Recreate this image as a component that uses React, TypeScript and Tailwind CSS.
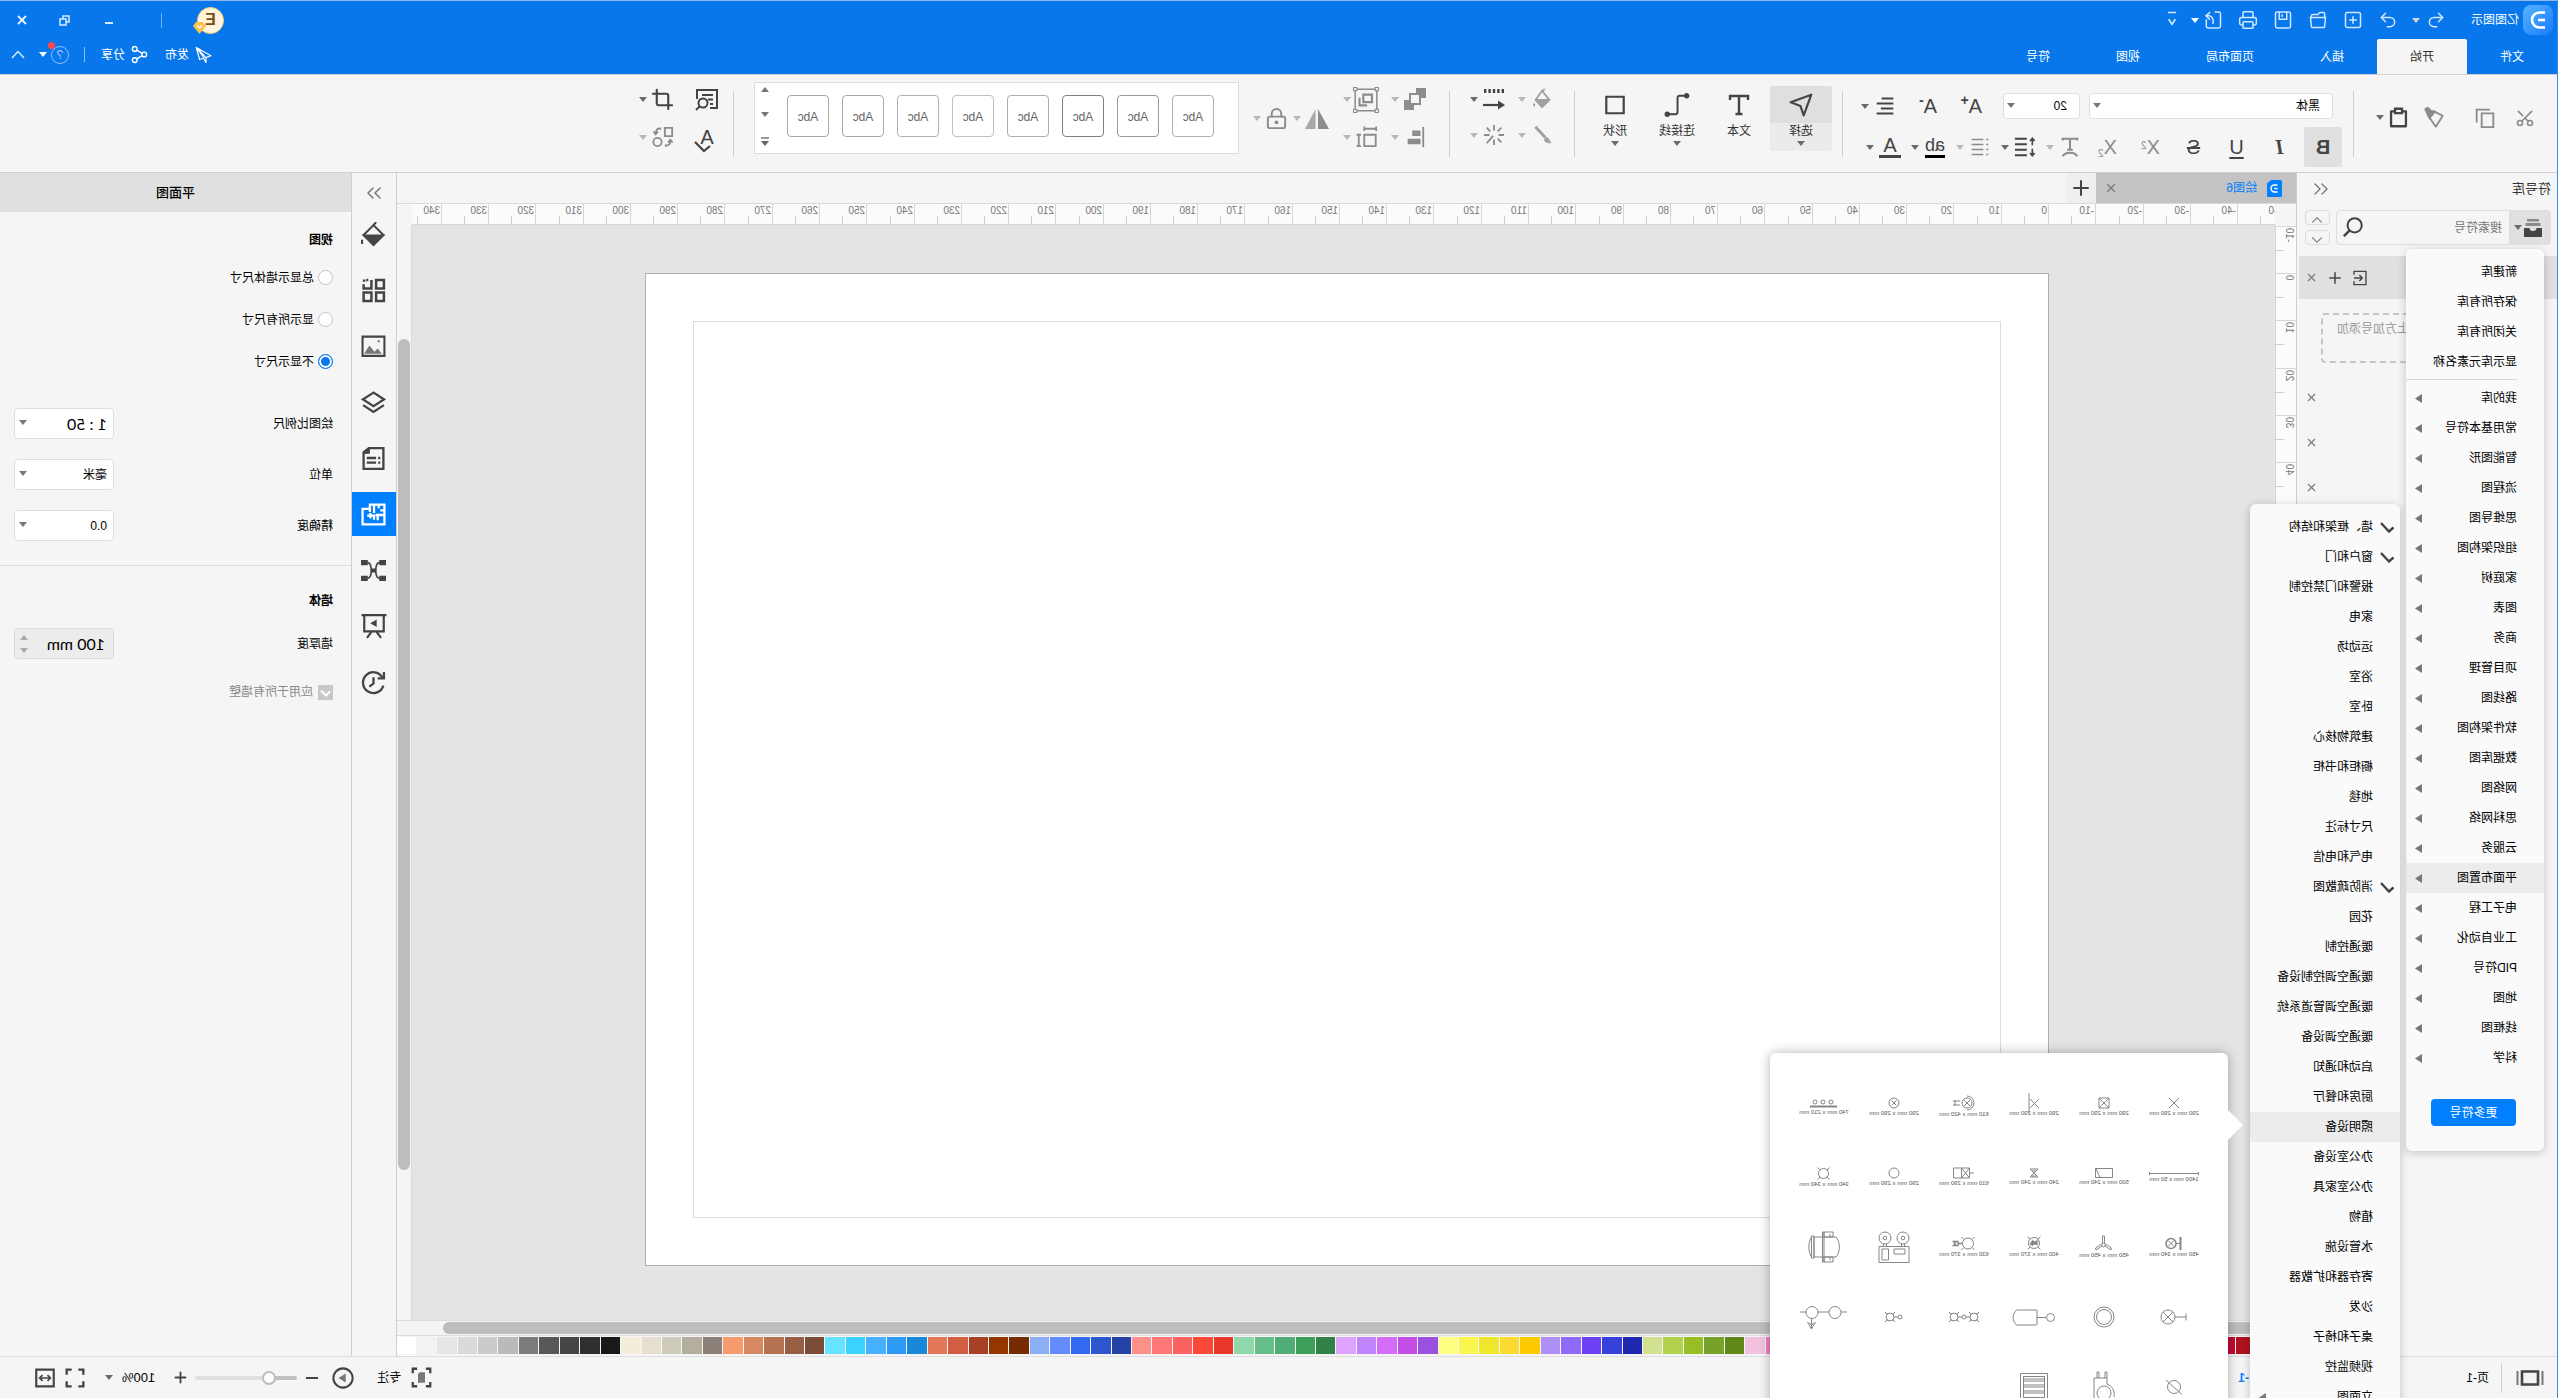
import React from "react";
import clsx from "clsx";
import {
  ChevronDown,
  ChevronUp,
  ChevronsLeft,
  ChevronsRight,
  Copy,
  Crop,
  LockKeyhole,
  Plus,
  Printer,
  Redo2,
  Save,
  Scissors,
  Search,
  Share2,
  SquarePlus,
  Undo2,
  X,
} from "lucide-react";

const mainMenuTop = ["新建库", "保存所有库", "关闭所有库", "显示库元素名称"];

const mainMenu = [
  "我的库",
  "常用基本符号",
  "智能图形",
  "流程图",
  "思维导图",
  "组织架构图",
  "家庭树",
  "图表",
  "商务",
  "项目管理",
  "路线图",
  "软件架构图",
  "数据库图",
  "网络图",
  "思科网络",
  "云服务",
  "平面布置图",
  "电子工程",
  "工业自动化",
  "PID符号",
  "地图",
  "线框图",
  "科学",
];

const subMenu: { label: string; checked?: boolean; more?: boolean }[] = [
  { label: "墙、框架和结构", checked: true },
  { label: "窗户和门", checked: true },
  { label: "报警和门禁控制" },
  { label: "家电" },
  { label: "运动场" },
  { label: "浴室" },
  { label: "卧室" },
  { label: "建筑物核心" },
  { label: "橱柜和书柜" },
  { label: "地毯" },
  { label: "尺寸标注" },
  { label: "电气和电信" },
  { label: "消防疏散图", checked: true },
  { label: "花园" },
  { label: "暖通控制" },
  { label: "暖通空调控制设备" },
  { label: "暖通空调管道系统" },
  { label: "暖通空调设备" },
  { label: "启动和通知" },
  { label: "厨房和餐厅" },
  { label: "照明设备" },
  { label: "办公室设备" },
  { label: "办公室家具" },
  { label: "植物" },
  { label: "水管设施" },
  { label: "寄存器和扩散器" },
  { label: "沙发" },
  { label: "桌子和椅子" },
  { label: "视频监控" },
  { label: "立面图", more: true },
];

const palette = [
  "#8a0f12", "#9c1016", "#b0121f", "#c40a33", "#d81b4a", "#e83a66", "#f06a8a", "#f59ab0",
  "#00695c", "#00897b", "#26a69a", "#4db6ac", "#80cbc4", "#37474f", "#455a64", "#607d8b",
  "#78909c", "#90a4ae", "#5d4037", "#795548", "#8d6e63", "#a1887f", "#8e1563", "#b01f7d",
  "#d4439f", "#f07fc6", "#f2c2de", "#5f8816", "#76a12a", "#97be25", "#b2d14c", "#d2e190",
  "#1f27ae", "#3641d9", "#6b41f3", "#8f6bf9", "#ad91f9", "#fdca00", "#fbdb30", "#efe72b",
  "#fbf54f", "#ffff84", "#9a51df", "#c44fe6", "#d56dfa", "#c084ff", "#dda3ff", "#318148",
  "#3d9f57", "#51ad76", "#66be89", "#91d7ac", "#e83829", "#fc4839", "#fb6161", "#ff7676",
  "#ff9089", "#2641a6", "#2d57d1", "#3369f1", "#648cff", "#8aaff7", "#762b00", "#943600",
  "#a83f27", "#d15e41", "#e47759", "#1988d9", "#2d9bf5", "#46b1ff", "#3cd2ff", "#66e4ff",
  "#7a4d38", "#985e44", "#b77351", "#d68861", "#f79b6f", "#8a8077", "#b3ae9e", "#cecbbc",
  "#e6dfd0", "#f4edda", "#191919", "#2f2f2f", "#454545", "#585858", "#7b7b7b", "#bababa",
  "#cbcbcb", "#dadada", "#e6e6e6", "#f2f2f2", "#ffffff",
];

// canvas scale: screen pixels for every 10 mm on paper
const STEP = 47.27;
const ORIGIN_X = 226;
const ORIGIN_Y = 48;

interface CaretProps {
  className?: string;
}

const Caret = ({ className = "text-[#6b6b6b]" }: CaretProps) => (
  <svg viewBox="0 0 8 5" className={clsx("h-[5px] w-2 shrink-0", className)}>
    <path d="M0 0h8L4 5z" fill="currentColor" />
  </svg>
);

interface DrawProps {
  size?: number;
  className?: string;
  width?: number;
  children: React.ReactNode;
}

const Draw = ({ size = 24, className, width = 2, children }: DrawProps) => (
  <svg
    viewBox="0 0 24 24"
    width={size}
    height={size}
    fill="none"
    stroke="currentColor"
    strokeWidth={width}
    className={clsx("shrink-0", className)}
  >
    {children}
  </svg>
);

const Divider = () => <div className="mt-4 h-[66px] w-px shrink-0 bg-[#cfcfcf]" />;

interface ToolProps {
  label: string;
  caret?: boolean;
  muted?: boolean;
  children: React.ReactNode;
}

const Tool = ({ label, caret, muted, children }: ToolProps) => (
  <button
    aria-label={label}
    className={clsx(
      "flex h-6 shrink-0 items-center gap-1",
      muted ? "text-[#8c8c8c]" : "text-[#444]"
    )}
  >
    <span className="grid h-6 w-6 place-items-center">{children}</span>
    {caret && <Caret className={muted ? "text-[#b8b8b8]" : "text-[#6b6b6b]"} />}
  </button>
);

const TitleBar = () => (
  <header className="flex h-[74px] shrink-0 justify-between border-t border-[#8fb8e6] bg-[#0877eb] text-xs text-white">
    <div className="flex flex-col">
      <div className="flex h-[38px] items-center pl-1 text-[#cfe7ff]">
        <div className="grid h-[30px] w-[30px] place-items-center rounded-lg bg-gradient-to-tr from-[#1a78ff] to-[#55b4ff]">
          <svg viewBox="0 0 20 20" className="h-5 w-5" fill="none" stroke="#fff" strokeWidth="2.6">
            <path d="M3 2.5h5.5a7.5 7.5 0 0 1 0 15H3" />
            <path d="M3 10h7" />
          </svg>
        </div>
        <span className="ml-1 w-[73px] text-white">亿图图示</span>
        <button aria-label="撤销" className="flex items-center gap-1.5">
          <Undo2 size={20} strokeWidth={1.8} />
          <Caret className="text-[#d8d8d8]" />
        </button>
        <div className="ml-3.5 flex items-center gap-[15px]">
          <button aria-label="重做"><Redo2 size={20} strokeWidth={1.8} /></button>
          <button aria-label="新建"><SquarePlus size={20} strokeWidth={1.8} /></button>
          <button aria-label="打开">
            <Draw size={20} width={1.8}>
              <path d="M4 8V5c0-1.500.5-2 2-2h4l2 2.500h6c1.500 0 2 .5 2 2V9M3 9h18l-1 10.500c-.2 1-.5 1.500-1.500 1.500h-13c-1 0-1.300-.5-1.500-1.500z" />
            </Draw>
          </button>
          <button aria-label="保存">
            <Draw size={20} width={1.8}>
              <path d="M5 2.500h14a2 2 0 0 1 2 2v15a2 2 0 0 1-2 2H5a2 2 0 0 1-2-2v-15a2 2 0 0 1 2-2zM7.500 2.500V11h9V2.500M13 5v3.500" />
            </Draw>
          </button>
          <button aria-label="打印"><Printer size={20} strokeWidth={1.8} /></button>
          <button aria-label="导出" className="flex items-center gap-1">
            <Draw size={20} width={1.8}>
              <path d="M10 2.500H5a2 2 0 0 0-2 2v15a2 2 0 0 0 2 2h13a2 2 0 0 0 2-2V11" />
              <path d="M15.500 2.500l5 4.500-5 4.500M20 7h-3c-4 0-6 4-5 10" />
            </Draw>
            <Caret className="text-white" />
          </button>
          <button aria-label="自定义" className="-ml-1.5">
            <Draw size={20} width={2}>
              <path d="M7 3h10M8 11l4 6 4-6" />
            </Draw>
          </button>
        </div>
      </div>
      <nav className="flex h-[35px]">
        {["文件", "开始", "插入", "页面布局", "视图", "符号"].map((tab) => (
          <button
            key={tab}
            className={clsx(
              "h-full rounded-t-xs px-[33px]",
              tab === "开始" ? "bg-[#f5f5f5] text-[#333]" : "text-white"
            )}
          >
            {tab}
          </button>
        ))}
      </nav>
    </div>

    <div className="flex flex-col">
      <div className="flex h-[38px] items-center justify-end pr-[17px]">
        <div className="relative mr-[35px]">
          <div className="grid h-[27px] w-[27px] place-items-center rounded-full border border-[#f3cf7a] bg-[#fff3dc] text-base font-bold text-[#7a4a12]">
            E
          </div>
          <svg viewBox="0 0 13 13" className="absolute -right-1 bottom-0 h-[13px] w-[13px]">
            <path d="M3 1h7l3 4-6.500 8L0 5z" fill="#fdc04a" />
            <path d="M4 4.500l2.500 2.500L9 4.500" fill="none" stroke="#fff" strokeWidth="1.300" />
          </svg>
        </div>
        <div className="mr-12 h-[15px] w-px bg-[#6fb2f7]" />
        <button aria-label="最小化" className="mr-[35px] mt-1.5 h-0.5 w-2 bg-[#d6eaff]" />
        <button aria-label="还原" className="mr-8">
          <svg viewBox="0 0 11 11" className="h-[11px] w-[11px]" fill="none" stroke="#d6eaff" strokeWidth="1.500">
            <path d="M3.500 7H1V1h6v2.500M4 4h6v6H4z" />
          </svg>
        </button>
        <button aria-label="关闭">
          <svg viewBox="0 0 10 10" className="h-2.5 w-2.5" stroke="#e8f4ff" strokeWidth="1.800">
            <path d="M1 1l8 8M9 1l-8 8" />
          </svg>
        </button>
      </div>
      <div className="flex h-[31px] items-center justify-end pr-[11px]">
        <button className="mr-4 flex items-center gap-[5px]">
          <Draw size={18} width={1.6}>
            <path d="M21 2L1.500 13l6.500 2.500L21 2l-4.500 16-6-2L21 2M8 15.500V22l3-5" strokeLinejoin="round" />
          </Draw>
          发布
        </button>
        <button className="mr-4 flex items-center gap-[5px]">
          <Share2 size={19} strokeWidth={1.8} />
          分享
        </button>
        <div className="mr-[15px] h-[15px] w-px bg-[#8cc3fa]" />
        <button aria-label="帮助" className="relative mr-3.5 flex items-center gap-1">
          <span className="grid h-[18px] w-[18px] place-items-center rounded-full border border-[#8cc3fa] text-[#a8d2fc]">
            ?
          </span>
          <Caret className="text-white" />
          <span className="absolute left-3.5 -top-1 h-[7px] w-[7px] rounded-full bg-[#ff4747]" />
        </button>
        <button aria-label="折叠功能区">
          <svg viewBox="0 0 14 9" className="h-[9px] w-3.5" fill="none" stroke="#d6eaff" strokeWidth="1.500">
            <path d="M1 8l6-6.500L13 8" />
          </svg>
        </button>
      </div>
    </div>
  </header>
);

const FontGroup = () => (
  <div className="ml-[11px] flex w-[499px] shrink-0 flex-col gap-2 pt-[18px] text-[#444]">
    <div className="flex h-[26px] items-center pl-[9px]">
      <div className="relative mr-[9px]">
        <select aria-label="字体" className="h-[26px] w-[244px] appearance-none rounded-sm border border-[#dedede] bg-white px-3 text-xs text-black">
          <option>黑体</option>
        </select>
        <Caret className="absolute right-1 top-2.5 text-[#777]" />
      </div>
      <div className="relative mr-[21px]">
        <select aria-label="字号" className="h-[26px] w-[77px] appearance-none rounded-sm border border-[#dedede] bg-white px-3 text-xs text-black">
          <option>20</option>
        </select>
        <Caret className="absolute right-1 top-2.5 text-[#777]" />
      </div>
      <button aria-label="增大字号" className="mr-[21px] flex w-6 items-start text-xl leading-6">
        A<span className="text-sm font-bold leading-3">+</span>
      </button>
      <button aria-label="减小字号" className="mr-4 flex w-6 items-start text-xl leading-6">
        A<span className="text-sm font-bold leading-3">-</span>
      </button>
      <Tool label="对齐" caret>
        <Draw size={20} width={2.6}>
          <path d="M2 3h14M2 9h20M2 15h15M2 21h20" />
        </Draw>
      </Tool>
    </div>
    <div className="flex h-10 items-center text-xl">
      <button className="mr-[3px] h-10 w-[38px] rounded-xs bg-[#e0e0e0] font-bold">B</button>
      <button className="w-[43px] font-['Liberation_Serif',serif] font-bold italic">I</button>
      <button className="w-[43px] underline underline-offset-3">U</button>
      <button className="w-[43px] line-through">S</button>
      <button className="w-[43px] text-[#8c8c8c]">
        X<sup className="text-[10px]">2</sup>
      </button>
      <button className="mr-1 w-[43px] text-[#8c8c8c]">
        X<sub className="text-[10px]">2</sub>
      </button>
      <div className="flex gap-[9px]">
        <Tool label="文字方向" caret muted>
          <Draw size={22} width={2.2}>
            <path d="M4 5V3h16v2M12 3v12M9 15h6M4 22c3-5 13-5 16 0" />
          </Draw>
        </Tool>
        <Tool label="行距" caret>
          <Draw size={22} width={2.4}>
            <path d="M10 3h13M10 9h13M10 15h13M10 21h13" />
            <path d="M4 3v7M1.500 5.500L4 2.500l2.500 3M4 14v7M1.500 18.500l2.500 3 2.500-3" strokeWidth="1.800" />
          </Draw>
        </Tool>
        <Tool label="项目符号" caret muted>
          <Draw size={20} width={2}>
            <path d="M8 3h14M8 9h14M8 15h14M8 21h14M2 3h2.500M2 9h2.500M2 15h2.500M2 21h2.500" />
          </Draw>
        </Tool>
        <Tool label="突出显示" caret>
          <span className="border-b-3 border-black text-lg leading-[19px]">ab</span>
        </Tool>
        <Tool label="字体颜色" caret>
          <span className="w-[22px] border-b-3 border-[#444] text-xl leading-[19px]">A</span>
        </Tool>
      </div>
    </div>
  </div>
);

interface BigToolProps {
  label: string;
  caret?: boolean;
  active?: boolean;
  children: React.ReactNode;
}

const BigTool = ({ label, caret, active, children }: BigToolProps) => (
  <button
    className={clsx(
      "flex h-[65px] w-[62px] flex-col items-center rounded-xs text-xs leading-4 text-[#333]",
      active && "bg-[#ebebeb]"
    )}
  >
    <span className={clsx("grid h-[37px] w-full place-items-center rounded-t-xs text-[#444]", active && "bg-[#dfdfdf]")}>
      {children}
    </span>
    {label}
    {caret && <Caret className="mt-0.5 text-[#6b6b6b]" />}
  </button>
);

const StyleGallery = () => {
  const borders = [
    "border-[#b0b0b0]",
    "border-[#9a9a9a]",
    "border-[#808080]",
    "border-[#adadad]",
    "border-[#c0c0c0]",
    "border-[#b0b0b0]",
    "border-[#a8a8a8]",
    "border-[#a8a8a8]",
  ];
  return (
    <div className="ml-3.5 mt-[7px] flex h-[72px] w-[485px] shrink-0 items-center justify-between border border-[#dcdcdc] bg-white pb-1 pl-6 pr-1.5">
      <div className="flex gap-[13px]">
        {borders.map((border, i) => (
          <button
            key={i}
            className={clsx("h-[42px] w-[42px] rounded-sm border-[1.5px] pt-0.5 text-xs text-[#666]", border)}
          >
            Abc
          </button>
        ))}
      </div>
      <div className="flex flex-col items-center gap-5">
        <button aria-label="上移"><Caret className="rotate-180 text-[#777]" /></button>
        <button aria-label="下移"><Caret className="text-[#777]" /></button>
        <button aria-label="更多样式" className="border-t-2 border-[#999] pt-0.5"><Caret className="text-[#666]" /></button>
      </div>
    </div>
  );
};

const Ribbon = () => (
  <div className="flex h-[99px] shrink-0 border-y border-[#d0d0d0] bg-[#f5f5f5]">
    <div className="flex w-[203px] shrink-0 items-center pb-3 pl-[22px] text-[#8c8c8c]">
      <button aria-label="剪切" className="mr-5"><Scissors size={20} className="-rotate-90" /></button>
      <button aria-label="复制" className="mr-[30px]">
        <Draw size={20} width={2.2}>
          <path d="M2 6.500h14V23H2z" />
          <path d="M6 2h16v15.500" />
        </Draw>
      </button>
      <button aria-label="格式刷" className="mr-3.5">
        <Draw size={22}>
          <path d="M2.500 9.500l9-4.500 5.500 6.500-7 10z" strokeLinejoin="round" />
          <path d="M11 5l4.500-1L19 .5l2.500 2L19.500 7l-2.500 5z" fill="currentColor" />
        </Draw>
      </button>
      <button aria-label="粘贴" className="flex items-center gap-1 text-[#444]">
        <Draw size={21} width={2.6}>
          <path d="M7 5H3.500v17h17V5H17" strokeLinejoin="round" />
          <path d="M8 2h8v5H8z" />
        </Draw>
        <Caret />
      </button>
    </div>
    <Divider />
    <FontGroup />
    <Divider />
    <div className="ml-2.5 mr-[9px] mt-[11px] flex shrink-0">
      <BigTool label="选择" caret active>
        <Draw size={26}>
          <path d="M2.500 2.500L21.500 9.500 12.500 13 9.500 21.500z" strokeLinejoin="round" />
        </Draw>
      </BigTool>
      <BigTool label="文本">
        <Draw size={24} width={2.4}>
          <path d="M3 7V3h18v4M12 3v18M8.500 21h7" />
        </Draw>
      </BigTool>
      <BigTool label="连接线" caret>
        <Draw size={26} width={1.8}>
          <path d="M3 3.500h6.500a2 2 0 0 1 2 2v13a2 2 0 0 0 2 2H21" />
          <circle cx="3" cy="3.500" r="1.600" fill="currentColor" />
          <circle cx="21" cy="20.500" r="1.600" fill="currentColor" />
        </Draw>
      </BigTool>
      <BigTool label="形状" caret>
        <Draw size={22} width={2.4}>
          <path d="M2.500 3h19v18h-19z" />
        </Draw>
      </BigTool>
    </div>
    <Divider />
    <div className="ml-5 mr-5 grid shrink-0 grid-cols-2 content-start gap-x-3 gap-y-3 pt-3">
      <Tool label="填充" caret muted>
        <Draw size={22} className="text-[#a0a0a0]">
          <path d="M4 13L12 3l7 10-7 8z" />
          <path d="M5 13h13l-6 7z" fill="currentColor" />
          <path d="M12 4l-3-3M20.500 17v3" />
        </Draw>
      </Tool>
      <Tool label="线型" caret>
        <Draw size={24} width={2.2}>
          <path d="M2 4h20" strokeWidth="4" strokeDasharray="2.400 2" />
          <path d="M7 18h16" />
          <path d="M8 13.500L1 18l7 4.500z" fill="currentColor" stroke="none" />
        </Draw>
      </Tool>
      <Tool label="线条" caret muted>
        <Draw size={20} width={3.4} className="text-[#a0a0a0]">
          <path d="M20 2L8 15" />
          <path d="M7 15c-4 0-3 5-6 6 4 1 8 0 8-4z" fill="currentColor" strokeWidth="1" />
        </Draw>
      </Tool>
      <Tool label="效果" caret muted>
        <Draw size={22}>
          <path d="M12 1v6M12 17v6M1 12h6M17 12h6M4 4l4 4M20 4l-4 4M4 20l4-4M13 13l7 8" />
        </Draw>
      </Tool>
    </div>
    <Divider />
    <div className="ml-[22px] grid shrink-0 grid-cols-2 content-start gap-x-3 gap-y-3.5 pt-3">
      <Tool label="置于顶层" caret muted>
        <Draw size={24}>
          <path d="M7 7h10v10H7z" />
          <path d="M1 1h10v5H6v5H1zM23 23H13v-5h5v-5h5z" fill="currentColor" stroke="none" />
        </Draw>
      </Tool>
      <Tool label="组合" caret muted>
        <Draw size={26} width={1.4}>
          <path d="M2 2h20v20H2z" />
          <path d="M6.500 7h8v7h-8zM11 17h7v-7" strokeWidth="2" />
          <path d="M.5.500h3v3h-3zM20.500.500h3v3h-3zM.5 20.500h3v3h-3zM20.500 20.500h3v3h-3z" fill="#f5f5f5" strokeWidth="1" />
        </Draw>
      </Tool>
      <Tool label="对齐形状" caret muted>
        <Draw size={22}>
          <path d="M3 1v22" />
          <path d="M6 5h9v6H6zM6 14h14v6H6z" fill="currentColor" stroke="none" />
        </Draw>
      </Tool>
      <Tool label="尺寸" caret muted>
        <Draw size={22}>
          <path d="M2.500 9.500h12.500V22H2.500z" />
          <path d="M2 3h13M2 .5v5M15 .5v5M21 9v13M18.500 9.500h5M18.500 22h5" />
        </Draw>
      </Tool>
    </div>
    <div className="ml-3.5 flex shrink-0 gap-1 pb-2.5">
      <div className="flex items-center">
        <Tool label="翻转" caret muted>
          <Draw size={24} width={0}>
            <path d="M11 2v20H0z" fill="#8c8c8c" />
            <path d="M13.500 2v20H24z" fill="#a8a8a8" />
          </Draw>
        </Tool>
      </div>
      <div className="flex items-center">
        <Tool label="锁定" caret muted>
          <LockKeyhole size={23} />
        </Tool>
      </div>
    </div>
    <StyleGallery />
    <div className="w-5 shrink-0" />
    <Divider />
    <div className="ml-3.5 grid shrink-0 grid-cols-[24px_auto] content-start gap-x-5 gap-y-3.5 pt-3">
      <Tool label="查找">
        <Draw size={24}>
          <path d="M9 21H2V3h20v9" />
          <path d="M6 8h11M6 12.500h5M6 17h3" />
          <circle cx="16" cy="16" r="4.500" />
          <path d="M19 19l4 4" />
        </Draw>
      </Tool>
      <Tool label="裁剪" caret>
        <Crop size={23} strokeWidth={2.2} className="-scale-x-100" />
      </Tool>
      <Tool label="拼写检查">
        <span className="relative text-xl leading-6">
          A
          <svg viewBox="0 0 20 12" className="absolute -bottom-1 left-0 h-3 w-5" fill="none" stroke="currentColor" strokeWidth="2.200">
            <path d="M4 5l6 5 9-9" />
          </svg>
        </span>
      </Tool>
      <Tool label="替换" caret muted>
        <Draw size={22}>
          <path d="M2 2h8v9H2z" />
          <circle cx="18" cy="17.500" r="4.500" />
          <path d="M14 3c4-1 6 1 6 5M17.500 6L20 9l2.500-3M10 21c-4 1-6-1-6-5M1.500 18L4 15l2.500 3" />
        </Draw>
      </Tool>
    </div>
  </div>
);

const LibraryMenu = () => (
  <div className="absolute left-[13px] top-[76px] z-30 flex w-[138px] flex-col rounded-md bg-[#fafafa] pb-[25px] pt-2 text-xs text-black shadow-[0_2px_10px_rgba(0,0,0,0.2)]">
    {mainMenuTop.map((item) => (
      <button key={item} className="h-[30px] pl-[27px] text-left">{item}</button>
    ))}
    <div className="mb-[3px] ml-[27px] mt-0.5 h-px bg-[#d9d9d9]" />
    {mainMenu.map((item) => (
      <button
        key={item}
        className={clsx(
          "flex h-[30px] items-center justify-between pl-[27px] pr-[9px]",
          item === "平面布置图" && "bg-[#ececec]"
        )}
      >
        {item}
        <svg viewBox="0 0 7 9" className="h-[9px] w-[7px]"><path d="M0 0l7 4.500L0 9z" fill="#777" /></svg>
      </button>
    ))}
    <button className="ml-[28px] mt-[26px] h-[27px] w-[85px] rounded-sm bg-[#007fff] text-white">更多符号</button>
  </div>
);

const SubMenu = () => (
  <div className="absolute left-[157px] top-[331px] z-30 flex w-[150px] flex-col rounded-md bg-[#fafafa] pt-2 text-xs text-black shadow-[0_2px_10px_rgba(0,0,0,0.22)]">
    {subMenu.map((item) => (
      <button
        key={item.label}
        className={clsx(
          "flex h-[30px] items-center pl-1.5 pr-[9px]",
          item.label === "照明设备" && "bg-[#ececec]"
        )}
      >
        <span className="w-[21px]">
          {item.checked && (
            <svg viewBox="0 0 14 11" className="h-[11px] w-3.5" fill="none" stroke="#444" strokeWidth="2.400">
              <path d="M.5 5.500l4.500 4 8-8.500" />
            </svg>
          )}
        </span>
        {item.label}
        {item.more && (
          <svg viewBox="0 0 7 9" className="ml-auto h-[9px] w-[7px]"><path d="M0 0l7 4.500L0 9z" fill="#777" /></svg>
        )}
      </button>
    ))}
  </div>
);

interface SymbolItem {
  w: number;
  h: number;
  label?: string;
  art: React.ReactNode;
}

const Rays = ({ x, y, r = 5 }: { x: number; y: number; r?: number }) => (
  <>
    <circle cx={x} cy={y} r={r} />
    <path
      d={`M${x - r - 1} ${y - r - 1}l2.500 2.500M${x + r + 1} ${y - r - 1}l-2.500 2.500M${x - r - 1} ${y + r + 1}l2.500-2.500M${x + r + 1} ${y + r + 1}l-2.500-2.500`}
    />
  </>
);

const symbols: SymbolItem[] = [
  { w: 12, h: 12, label: "290 mm x 290 mm", art: <path d="M1 1l10 10M11 1L1 11" /> },
  { w: 12, h: 12, label: "290 mm x 290 mm", art: <path d="M1 1h10v10H1zM1 1l10 10M11 1L1 11" /> },
  { w: 12, h: 12, label: "290 mm x 290 mm", art: <path d="M1 2l9 9M10 2l-9 9M11-4v20" /> },
  {
    w: 22,
    h: 14,
    label: "610 mm x 420 mm",
    art: (
      <>
        <circle cx="8" cy="7" r="5" />
        <path d="M5 4l6 6M11 4l-6 6M8 0a7 7 0 0 0 0 14M15 5h7M15 9h7M20 4v6" />
      </>
    ),
  },
  {
    w: 12,
    h: 12,
    label: "290 mm x 290 mm",
    art: (
      <>
        <circle cx="6" cy="6" r="5" />
        <path d="M3.500 3.500l5 5M8.500 3.500l-5 5" />
      </>
    ),
  },
  {
    w: 27,
    h: 9,
    label: "740 mm x 210 mm",
    art: (
      <>
        <circle cx="6" cy="3" r="2" />
        <circle cx="14" cy="3" r="2" />
        <circle cx="22" cy="3" r="2" />
        <path d="M0 7.500h27" strokeWidth="2" />
      </>
    ),
  },
  { w: 50, h: 3, label: "1400 mm x 50 mm", art: <path d="M0 1.500h50M.5 0v3M49.500 0v3" /> },
  { w: 18, h: 10, label: "500 mm x 240 mm", art: <path d="M.5.500h17v9H.5zM13 9.500l4-9" /> },
  { w: 10, h: 10, label: "240 mm x 240 mm", art: <path d="M1 1h8L1 9h8zM1 1l8 8M3 3h4M3 8h4" /> },
  { w: 21, h: 12, label: "610 mm x 290 mm", art: <path d="M4.500 1h16v10h-16zM12.500 1v10M4.500 1l8 10M12.500 1l-8 10M0 6h4" /> },
  { w: 12, h: 12, label: "290 mm x 290 mm", art: <circle cx="6" cy="6" r="5" /> },
  { w: 13, h: 13, label: "340 mm x 340 mm", art: <Rays x={6.5} y={6.5} /> },
  {
    w: 17,
    h: 13,
    label: "450 mm x 340 mm",
    art: (
      <>
        <circle cx="11" cy="6.500" r="5" strokeWidth="1.500" />
        <path d="M8 3.500l6 6M14 3.500l-6 6M2 6.500h4" />
        <path d="M1.500 0v13" strokeWidth="2" />
      </>
    ),
  },
  {
    w: 17,
    h: 15,
    label: "450 mm x 450 mm",
    art: (
      <>
        <circle cx="8.500" cy="9" r="1.800" />
        <path d="M7.500 7V0h2v7M7 10l-6 4-.5-2 6-4M10 10l6 4 .5-2-6-4" />
      </>
    ),
  },
  {
    w: 14,
    h: 14,
    label: "400 mm x 370 mm",
    art: (
      <>
        <Rays x={7} y={7} r={5.5} />
        <path d="M4 9V5l2 2 2-2v4M9 5v4l2-2M4 6h6M4 8h7" strokeWidth="1.400" />
      </>
    ),
  },
  {
    w: 23,
    h: 13,
    label: "630 mm x 370 mm",
    art: (
      <>
        <Rays x={7} y={6.5} r={5.5} />
        <path d="M13 6.500h4M17 4.500h3v4h-3zM22.500 4.500h-2v4h2" strokeWidth="1.300" />
      </>
    ),
  },
  {
    w: 32,
    h: 33,
    art: (
      <>
        <circle cx="7" cy="7" r="6" />
        <circle cx="25" cy="7" r="6" />
        <circle cx="7" cy="7" r="1.800" />
        <circle cx="25" cy="7" r="1.800" />
        <path d="M1 15.500h30v16H1zM5 18h11v5H5zM21.500 18h6.500v11h-6.500zM5.500 13v2.500M8.500 13v2.500M23.500 13v2.500M26.500 13v2.500" />
      </>
    ),
  },
  {
    w: 32,
    h: 32,
    art: (
      <>
        <path d="M4 6h22v20H4C-.5 21-.5 11 4 6zM26 5h2.500v22H26zM28.500 6c3.500 5 3.500 15 0 20M7 1h9v5H7zM16 1h1.500v30H16zM7 26h9v5H7zM10 3v3M10 26v3" />
      </>
    ),
  },
  {
    w: 27,
    h: 16,
    art: (
      <>
        <circle cx="19" cy="8" r="7" />
        <path d="M14 3l10 10M24 3L14 13M1 8h11M1 4.500v7" />
      </>
    ),
  },
  {
    w: 22,
    h: 22,
    art: (
      <>
        <circle cx="11" cy="11" r="10" />
        <circle cx="11" cy="11" r="7.500" />
      </>
    ),
  },
  {
    w: 43,
    h: 17,
    art: (
      <>
        <circle cx="4.500" cy="8.500" r="4" />
        <path d="M8.500 8.500H18M18 1.500q0-.5 1-.5h19.500c4.500 5 4.500 10 0 15H19q-1 0-1-1z" />
      </>
    ),
  },
  {
    w: 32,
    h: 12,
    art: (
      <>
        <Rays x={6} y={6} r={4} />
        <circle cx="16" cy="6" r="2" />
        <Rays x={26} y={6} r={4} />
        <path d="M10 6h4M18 6h4" />
      </>
    ),
  },
  {
    w: 19,
    h: 12,
    art: (
      <>
        <circle cx="3" cy="6" r="2" />
        <Rays x={13} y={6} r={4} />
        <path d="M5 6h4" />
      </>
    ),
  },
  {
    w: 47,
    h: 25,
    art: (
      <>
        <circle cx="12" cy="7.500" r="6" />
        <circle cx="35" cy="7.500" r="6" />
        <path d="M0 7h6M18 7h11M41 7h6M35.500 14v10M31.500 17l4 7 4-7M33 17.500l2.500 3 2.500-3" />
      </>
    ),
  },
  {
    w: 16,
    h: 16,
    art: (
      <>
        <circle cx="8" cy="8" r="6.500" />
        <path d="M0 15.500L16 1" />
      </>
    ),
  },
  {
    w: 22,
    h: 32,
    art: (
      <>
        <circle cx="11" cy="22" r="7" />
        <path d="M8 7V1h2v6M16 7V1h2v6M21 30V7H8v6C2 16 0 20 1 26" />
      </>
    ),
  },
  {
    w: 28,
    h: 28,
    art: <path d="M.5.500h27v27H.5zM3.500 3.500h21v21h-21zM3.500 6h21M3.500 8h21M3.500 12h21M3.500 14h21M3.500 18h21M3.500 20h21" />,
  },
];

const SymbolPreview = () => (
  <div className="absolute left-[329px] top-[880px] z-20 h-[380px] w-[458px] rounded-md bg-white px-[19px] pt-[19px] shadow-[0_0_12px_rgba(0,0,0,0.3)]">
    <svg viewBox="0 0 15 30" className="absolute -left-[15px] top-[57px] h-[30px] w-[15px]">
      <path d="M15 0L0 15l15 15z" fill="#fff" />
    </svg>
    <div className="grid grid-cols-6">
      {symbols.map((symbol, i) => (
        <div key={i} className="flex h-[70px] flex-col items-center justify-center">
          <svg
            viewBox={`0 0 ${symbol.w} ${symbol.h}`}
            width={symbol.w}
            height={symbol.h}
            fill="none"
            stroke="#858585"
            strokeWidth="1"
            className="overflow-visible"
          >
            {symbol.art}
          </svg>
          {symbol.label && (
            <span className="whitespace-nowrap text-[6px] leading-[8px] text-[#555]">{symbol.label}</span>
          )}
        </div>
      ))}
    </div>
  </div>
);

const LibraryPanel = () => (
  <aside className="flex w-[261px] shrink-0 flex-col border-r border-[#cfcfcf] text-xs">
    <div className="flex h-[31px] items-center justify-between pl-1.5 pr-3 text-[13px] text-[#333]">
      符号库
      <button aria-label="收起">
        <ChevronsLeft size={24} strokeWidth={1.4} className="text-[#777]" />
      </button>
    </div>
    <div className="mt-1.5 flex h-[35px] pl-1.5">
      <button aria-label="符号库菜单" className="flex w-[41px] items-center gap-0.5 rounded-l-sm bg-[#e0e0e0] pl-[9px]">
        <svg viewBox="0 0 18 18" className="h-[18px] w-[18px]">
          <path d="M3 0h12v2.500H3zM1.500 4h15v3h-15z" fill="#8a8a8a" />
          <path d="M0 9h5.500q0 3 3.500 3t3.500-3H18v9H0z" fill="#444" />
        </svg>
        <Caret />
      </button>
      <div className="relative">
        <input
          type="text"
          aria-label="搜索符号"
          placeholder="搜索符号"
          className="h-full w-[174px] rounded-r-sm border border-[#dedede] bg-[#f5f5f5] px-[7px] text-xs placeholder:text-[#777]"
        />
        <Draw size={20} width={2.4} className="absolute right-[7px] top-[7px] text-[#444]">
          <circle cx="10" cy="10" r="8.500" />
          <path d="M16 16l7 7" strokeWidth="3" />
        </Draw>
      </div>
      <div className="ml-1.5 flex flex-col justify-between text-[#888]">
        <button aria-label="上一个" className="grid h-[15px] w-[25px] place-items-center rounded-sm border border-[#dcdcdc]">
          <ChevronUp size={18} strokeWidth={1.5} />
        </button>
        <button aria-label="下一个" className="grid h-[15px] w-[25px] place-items-center rounded-sm border border-[#dcdcdc]">
          <ChevronDown size={18} strokeWidth={1.5} />
        </button>
      </div>
    </div>
    <div className="mr-0.5 mt-[11px] flex h-[43px] items-center justify-end bg-[#e0e0e0] pr-1.5 text-[#444]">
      <button aria-label="导入" className="mr-2">
        <Draw size={16}>
          <path d="M21 7V2H3v20h18v-5" />
          <path d="M21 12H9M13 7.500L8.500 12l4.500 4.500" />
        </Draw>
      </button>
      <button aria-label="添加" className="mr-2"><Plus size={18} /></button>
      <button aria-label="关闭"><X size={13} className="text-[#777]" /></button>
    </div>
    <div className="ml-6 mr-6 mt-3.5 h-[50px] rounded-sm border-2 border-dashed border-[#c6c6c6] pr-3.5 pt-1.5 text-right text-[#999]">
      点击上方加号添加
    </div>
    <div className="mt-3 flex flex-col items-end pr-2">
      {[0, 1, 2].map((row) => (
        <button key={row} aria-label="关闭" className="flex h-[45px] items-center">
          <X size={13} className="text-[#777]" />
        </button>
      ))}
    </div>
  </aside>
);

const HorizontalRuler = () => (
  <div className="relative ml-[21px] mr-[15px] h-[21px] overflow-hidden border-b border-[#d6d6d6] bg-[#fbfbfb] text-[10px] leading-[14px] text-[#777]">
    {Array.from({ length: 40 }, (_, i) => i - 5).map((n) => (
      <div key={n} className="absolute top-0 h-full border-l border-[#d6d6d6] pl-px" style={{ left: ORIGIN_X + Math.round(n * STEP) }}>
        {n * 10}
        <span className="absolute bottom-0 left-[23px] h-2 w-px bg-[#cfcfcf]" />
      </div>
    ))}
  </div>
);

const VerticalRuler = () => (
  <div className="relative w-[21px] shrink-0 overflow-hidden border-r border-[#d6d6d6] bg-[#fbfbfb] text-[10px] leading-3 text-[#777]">
    {Array.from({ length: 23 }, (_, i) => i - 1).map((n) => (
      <div key={n} className="absolute left-0 w-full border-t border-[#d6d6d6] pt-px" style={{ top: ORIGIN_Y + Math.round(n * STEP) }}>
        <span className="ml-px block w-3 rotate-180 [writing-mode:vertical-rl]">{n * 10}</span>
        <span className="absolute right-0 top-[23px] h-px w-2 bg-[#cfcfcf]" />
      </div>
    ))}
  </div>
);

const Editor = () => (
  <main className="flex min-w-0 flex-1 flex-col">
    <div className="flex h-[31px] shrink-0 border-b border-[#d9d9d9]">
      <div className="flex w-[200px] items-center bg-[#c3c3c3] pl-3.5 pr-2 text-[#007fff]">
        <svg viewBox="0 0 15 17" className="mr-2.5 h-[17px] w-[15px]">
          <path d="M1.500 0H11l4 3.500V15.500q0 1.500-1.500 1.500h-12Q0 17 0 15.500v-14Q0 0 1.500 0z" fill="#007fff" />
          <path d="M4.500 5H7.500a3.500 3.500 0 0 1 0 7h-3M4.500 8.500H8" fill="none" stroke="#fff" strokeWidth="1.400" />
        </svg>
        <span className="text-xs">绘图6</span>
        <button aria-label="关闭标签" className="ml-auto text-[#777]"><X size={14} strokeWidth={2} /></button>
      </div>
      <button aria-label="新建标签" className="grid w-[30px] place-items-center bg-[#efefef] text-[#444]">
        <Plus size={24} />
      </button>
    </div>
    <HorizontalRuler />
    <div className="flex min-h-0 flex-1">
      <VerticalRuler />
      <div className="relative min-w-0 flex-1 overflow-hidden bg-[#e4e4e4]">
        <div
          className="absolute border border-[#b0b0b0] bg-white p-[47px]"
          style={{ left: ORIGIN_X, top: ORIGIN_Y, width: Math.round(29.7 * STEP), height: Math.round(21 * STEP) }}
        >
          <div className="h-full border border-[#dcdcdc]" />
        </div>
      </div>
      <div className="flex w-[15px] flex-col items-center border-l border-[#dadada] bg-[#f5f5f5]">
        <div className="mt-[114px] h-[831px] w-3 rounded-full bg-[#bdbdbd]" />
      </div>
    </div>
    <div className="flex h-[15px] shrink-0 items-center border-t border-[#dadada] pl-7">
      <div className="mr-[46px] h-3 flex-1 rounded-full bg-[#bdbdbd]" />
    </div>
    <div className="flex h-[21px] shrink-0 gap-px border-t border-[#dadada] pb-0.5 pt-px">
      {palette.map((color, i) => (
        <button key={i} aria-label={color} className="min-w-0 flex-1" style={{ backgroundColor: color }} />
      ))}
    </div>
  </main>
);

const SideTools = () => (
  <div className="flex w-[46px] shrink-0 flex-col items-center border-x border-[#cfcfcf] text-[#444]">
    <button aria-label="展开" className="mb-2 grid h-[31px] place-items-center pt-2 text-[#777]">
      <ChevronsRight size={24} strokeWidth={1.5} />
    </button>
    {[
      <Draw key="fill" size={25}>
        <path d="M2.500 13.500L12 4l9.500 9.500L12 22.500z" transform="translate(0 -1)" />
        <path d="M3 13h18l-9 9z" fill="currentColor" />
        <path d="M12 3l-2.500-3M23 17v4" />
      </Draw>,
      <Draw key="grid" size={25} width={2.4}>
        <path d="M2 2h7.500v8H2zM2 14h7.500v8H2zM14 14h7.500v8H14zM14 2v8h7.500V6M17 2h2M21 1.500v2" />
      </Draw>,
      <Draw key="image" size={25} width={2}>
        <path d="M1.500 2.500h21v18.500h-21z" />
        <path d="M4 19l4-5 3 3 5-6 5 8z" fill="#777" stroke="none" />
        <path d="M6 6h2v2H6z" fill="#777" stroke="none" />
      </Draw>,
      <Draw key="layers" size={25} width={2.2}>
        <path d="M12 2.500l10 6.500-10 6.500L2 9z" />
        <path d="M2 14.500L12 21l10-6.500" />
      </Draw>,
      <Draw key="page" size={25} width={2.2}>
        <path d="M2.500 2h14l5 4v16h-19z" />
        <path d="M16 2v5h5.500z" fill="currentColor" strokeWidth="1" />
        <path d="M5.500 11.500h2M9.500 11.500h9M5.500 16h2M9.500 16h9" />
      </Draw>,
      <Draw key="floor" size={25} width={2.2}>
        <path d="M1.500 2.500h14v4h7v15h-21z" />
        <path d="M1.500 8h4M7 2.500V6M11.500 2.500v8M15.500 6.500v3M18 13h-6.500v4M1.500 12.500H8v5M6 12.500h4M15 10.500v5" />
      </Draw>,
      <Draw key="mind" size={25} width={1.6}>
        <path d="M0 2h6.500v5H0zM17.500 2H24v5h-6.500zM0 17h6.500v5H0zM17.500 17H24v5h-6.500zM9 10h6v4H9z" fill="currentColor" stroke="none" />
        <path d="M6 4.500c5 0 2.500 7 5 7.500-2.500.5 0 7.500-5 7.500M18 4.500c-5 0-2.500 7-5 7.500 2.500.5 0 7.500 5 7.500" />
      </Draw>,
      <Draw key="show" size={26} width={2}>
        <path d="M.5 2h23M3 2v15h18V2M10 17l-4.500 6M14 17l4.500 6" />
        <path d="M9.500 6l6 3.500-6 3.500z" fill="currentColor" stroke="none" />
      </Draw>,
      <Draw key="history" size={25} width={2.2}>
        <path d="M3.500 7a10 10 0 1 1-1 8" />
        <path d="M2 2v6h6" />
        <path d="M12 7v6l4 3" />
      </Draw>,
    ].map((icon, i) => (
      <button
        key={i}
        aria-label={`面板 ${i + 1}`}
        className={clsx("mb-3 grid h-11 w-11 shrink-0 place-items-center", i === 5 && "bg-[#007fff] text-white")}
      >
        {icon}
      </button>
    ))}
  </div>
);

interface PropRowProps {
  id: string;
  label: string;
  value: string;
  className?: string;
}

const PropRow = ({ id, label, value, className }: PropRowProps) => (
  <div className="flex h-[31px] items-center justify-between pl-[18px] pr-3.5">
    <label htmlFor={id}>{label}</label>
    <div className="relative">
      <select id={id} className={clsx("h-[31px] w-[100px] appearance-none rounded-sm border border-[#dedede] bg-white px-1.5", className)}>
        <option>{value}</option>
      </select>
      <Caret className="absolute right-[5px] top-3 text-[#777]" />
    </div>
  </div>
);

const PropertyPanel = () => (
  <aside className="w-[351px] shrink-0 text-xs text-black">
    <h2 className="flex h-[39px] items-center justify-center bg-[#e0e0e0] text-[13px] font-medium">平面图</h2>
    <h3 className="mt-5 pl-[18px] font-bold">视图</h3>
    <div className="mt-[22px] flex flex-col gap-[27px] pl-[18px]">
      {["总显示墙体尺寸", "显示所有尺寸", "不显示尺寸"].map((option) => (
        <label key={option} className="flex h-[15px] items-center gap-1">
          <input
            type="radio"
            name="dimension"
            defaultChecked={option === "不显示尺寸"}
            className="h-[15px] w-[15px] appearance-none rounded-full border border-[#c4c4c4] bg-white checked:border-[#0877eb] checked:bg-[#0877eb] checked:shadow-[inset_0_0_0_2px_white]"
          />
          {option}
        </label>
      ))}
    </div>
    <div className="mt-[39px] flex flex-col gap-5">
      <PropRow id="scale" label="绘图比例尺" value="1 : 50" className="font-['Lato',sans-serif] text-base" />
      <PropRow id="unit" label="单位" value="毫米" />
      <PropRow id="precision" label="精确度" value="0.0" />
    </div>
    <hr className="mt-6 border-[#dcdcdc]" />
    <h3 className="mt-[27px] pl-[18px] font-bold">墙体</h3>
    <div className="mt-[19px] flex h-[31px] items-center justify-between pl-[18px] pr-3.5">
      <label htmlFor="thickness">墙厚度</label>
      <div className="relative">
        <input
          id="thickness"
          type="text"
          defaultValue="100 mm"
          className="h-[31px] w-[100px] rounded-sm border border-[#dcdcdc] bg-[#ececec] px-2 font-['Lato',sans-serif] text-base"
        />
        <div className="absolute right-1.5 top-[7px] flex flex-col gap-2">
          <Caret className="rotate-180 text-[#aaa]" />
          <Caret className="text-[#aaa]" />
        </div>
      </div>
    </div>
    <label className="mt-[25px] flex items-center gap-[5px] pl-[18px] text-[#888]">
      <span className="relative h-[15px] w-[15px]">
        <input type="checkbox" defaultChecked className="block h-[15px] w-[15px] appearance-none bg-[#c8c8c8]" />
        <svg viewBox="0 0 15 15" className="absolute inset-0" fill="none" stroke="#fff" strokeWidth="2">
          <path d="M3 6.500l4 4 5-5" />
        </svg>
      </span>
      应用于所有墙壁
    </label>
  </aside>
);

const StatusBar = () => (
  <footer className="flex h-[42px] shrink-0 items-center justify-between border-t border-[#dcdcdc] pl-[13px] pr-[35px] text-xs text-black">
    <div className="flex items-center">
      <svg viewBox="0 0 28 16" className="h-4 w-7" fill="none" stroke="#444" strokeWidth="2">
        <path d="M6 1.500h16v13H6z" strokeWidth="2.600" />
        <path d="M1.500 1v14M26.500 1v14" stroke="#777" />
      </svg>
      <div className="ml-3.5 mr-3 h-[30px] w-px bg-[#cfcfcf]" />
      <span className="w-[228px]">页-1</span>
      <span className="font-bold text-[#007fff]">页-1</span>
    </div>
    <div className="flex items-center text-[#444]">
      <button className="flex items-center gap-2.5 text-black">
        <Draw size={21} width={2.6} className="text-[#444]">
          <path d="M2 7V2h5M17 2h5v5M22 17v5h-5M7 22H2v-5" />
          <path d="M8 6h6l2 2v10H8z" fill="#777" stroke="none" />
        </Draw>
        专注
      </button>
      <button aria-label="播放" className="ml-[23px] mr-3.5">
        <Draw size={22} width={2.2}>
          <circle cx="12" cy="12" r="10.500" />
          <path d="M9 7l8 5-8 5z" fill="#777" stroke="none" />
        </Draw>
      </button>
      <button aria-label="缩小" className="mr-[9px] h-0.5 w-3 bg-[#444]" />
      <input
        type="range"
        aria-label="缩放"
        defaultValue={24}
        className="h-1 w-[102px] appearance-none rounded-full bg-linear-to-r from-[#c0c0c0] from-26% to-[#e0e0e0] to-26% [&::-webkit-slider-thumb]:h-[14px] [&::-webkit-slider-thumb]:w-[14px] [&::-webkit-slider-thumb]:appearance-none [&::-webkit-slider-thumb]:rounded-full [&::-webkit-slider-thumb]:border-2 [&::-webkit-slider-thumb]:border-[#bdbdbd] [&::-webkit-slider-thumb]:bg-white"
      />
      <button aria-label="放大" className="ml-1.5 mr-[17px]"><Plus size={17} strokeWidth={2.6} /></button>
      <button className="flex items-center gap-[9px] text-[13px] text-black">
        100%
        <Caret />
      </button>
      <button aria-label="全屏" className="ml-5 mr-2.5">
        <Draw size={20} width={2.8}>
          <path d="M2 8V2h6M16 2h6v6M22 16v6h-6M8 22H2v-6" />
        </Draw>
      </button>
      <button aria-label="适合宽度">
        <Draw size={20} width={2.6}>
          <path d="M1.500 2h21v20h-21z" />
          <path d="M6 12h12M9 8.500L5.500 12 9 15.500M15 8.500l3.500 3.500-3.500 3.500" strokeWidth="2" />
        </Draw>
      </button>
    </div>
  </footer>
);

// The whole window is flipped left to right.
const App = () => {
  return (
    <div className="flex h-screen -scale-x-100 flex-col overflow-hidden border-l border-[#3b8fe8] bg-[#f5f5f5] font-['Liberation_Sans','Noto_Sans_CJK_SC',sans-serif]">
      <TitleBar />
      <Ribbon />
      <div className="relative flex min-h-0 flex-1">
        <LibraryPanel />
        <Editor />
        <SideTools />
        <PropertyPanel />
        <LibraryMenu />
        <SubMenu />
        <SymbolPreview />
      </div>
      <StatusBar />
    </div>
  );
};

export default App;
